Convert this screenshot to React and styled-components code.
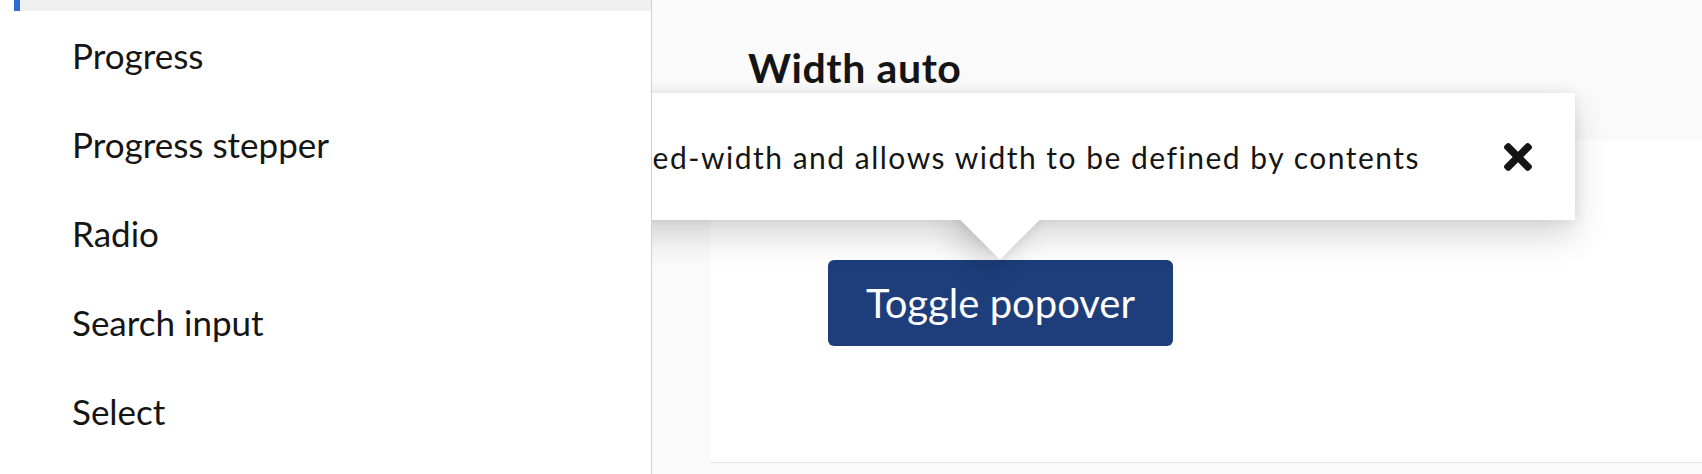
import React from 'react';
import styled, { createGlobalStyle } from "styled-components";

const GlobalStyle = createGlobalStyle`
  html, body {
    margin: 0;
    padding: 0;
    overflow: hidden;
  }
  body {
    font-family: Lato, "Open Sans", sans-serif;
    color: #151515;
  }
`

const Page = styled.div`
  display: flex;
  width: 1702px;
  height: 474px;
  overflow: hidden;`

const Sidebar = styled.nav`
  box-sizing: border-box;
  width: 652px;
  flex-shrink: 0;
  background: #fff;
  border-right: 1px solid #d2d2d2;
  position: relative;
  z-index: 2;`

const CurrentItem = styled.div`
  height: 11px;
  margin-left: 14px;
  border-left: 6px solid #2b6bd3;
  background: #f0f0f0;`

const NavItem = styled.a`
  display: flex;
  align-items: center;
  height: 89px;
  padding-left: 72px;
  padding-bottom: 2px;
  box-sizing: border-box;
  font-size: 35px;
  color: #151515;
  text-decoration: none;`

const Main = styled.main`
  flex: 1;
  background: #fafafa;
  position: relative;
  overflow: hidden;`

const Heading = styled.h2`
  margin: 0;
  padding: 44px 0 0 96px;
  font-size: 41px;
  line-height: 48px;
  letter-spacing: 0.6px;
  font-weight: 700;
  color: #151515;`

const Card = styled.section`
  margin: 48px 0 0 58px;
  height: 323px;
  padding: 120px 0 0 118px;
  box-sizing: border-box;
  background: #fff;
  border-bottom: 1px solid #e8e8e8;
  width: 1200px;`

const Anchor = styled.div`
  position: relative;
  display: inline-block;`

const Button = styled.button`
  display: flex;
  align-items: center;
  height: 86px;
  padding: 0 38px;
  border: none;
  border-radius: 6px;
  background: #1d3e7b;
  color: #fff;
  font-family: Lato, sans-serif;
  font-size: 40px;
  cursor: pointer;`

const Popover = styled.div`
  position: absolute;
  right: -402px;
  bottom: calc(100% + 40px);
  box-shadow: 0 16px 32px 0 rgba(3, 3, 3, 0.16), 0 0 12px 0 rgba(3, 3, 3, 0.08);`

const Arrow = styled.div`
  position: absolute;
  right: 547px;
  bottom: -28px;
  width: 56px;
  height: 56px;
  background: #fff;
  transform: rotate(45deg);
  box-shadow: 0 16px 32px 0 rgba(3, 3, 3, 0.16), 0 0 12px 0 rgba(3, 3, 3, 0.08);`

const Content = styled.div`
  position: relative;
  display: flex;
  align-items: center;
  gap: 84px;
  height: 127px;
  padding: 0 43px;
  background: #fff;
  white-space: nowrap;
  font-size: 30px;
  letter-spacing: 1.5px;
  color: #151515;`

const Close = styled.button`
  display: flex;
  padding: 0;
  border: none;
  background: none;
  color: #151515;
  cursor: pointer;`

const TimesIcon = () => (
  <svg width="28" height="28" viewBox="0 80 352 352" fill="currentColor">
    <path d="M242.72 256l100.07-100.07c12.28-12.28 12.28-32.19 0-44.48l-22.24-22.240c-12.28-12.28-32.19-12.28-44.48 0L176 189.28 75.93 89.21c-12.28-12.28-32.19-12.28-44.48 0L9.21 111.45c-12.28 12.28-12.28 32.19 0 44.48L109.28 256 9.21 356.07c-12.28 12.28-12.28 32.19 0 44.48l22.24 22.24c12.28 12.28 32.2 12.28 44.48 0L176 322.72l100.07 100.07c12.28 12.28 32.2 12.28 44.48 0l22.24-22.24c12.28-12.28 12.28-32.19 0-44.48L242.72 256z" />
  </svg>
)

const items = ['Progress', 'Progress stepper', 'Radio', 'Search input', 'Select']

const App = () => {
  return (
    <>
      <GlobalStyle />
      <Page>
        <Sidebar>
          <CurrentItem />
          {items.map(name => (
            <NavItem key={name} href="#">{name}</NavItem>
          ))}
        </Sidebar>
        <Main>
          <Heading>Width auto</Heading>
          <Card>
            <Anchor>
              <Popover>
                <Arrow />
                <Content>
                  <span>Removes fixed-width and allows width to be defined by contents</span>
                  <Close aria-label="Close"><TimesIcon /></Close>
                </Content>
              </Popover>
              <Button>Toggle popover</Button>
            </Anchor>
          </Card>
        </Main>
      </Page>
    </>
  )
}

export default App;
